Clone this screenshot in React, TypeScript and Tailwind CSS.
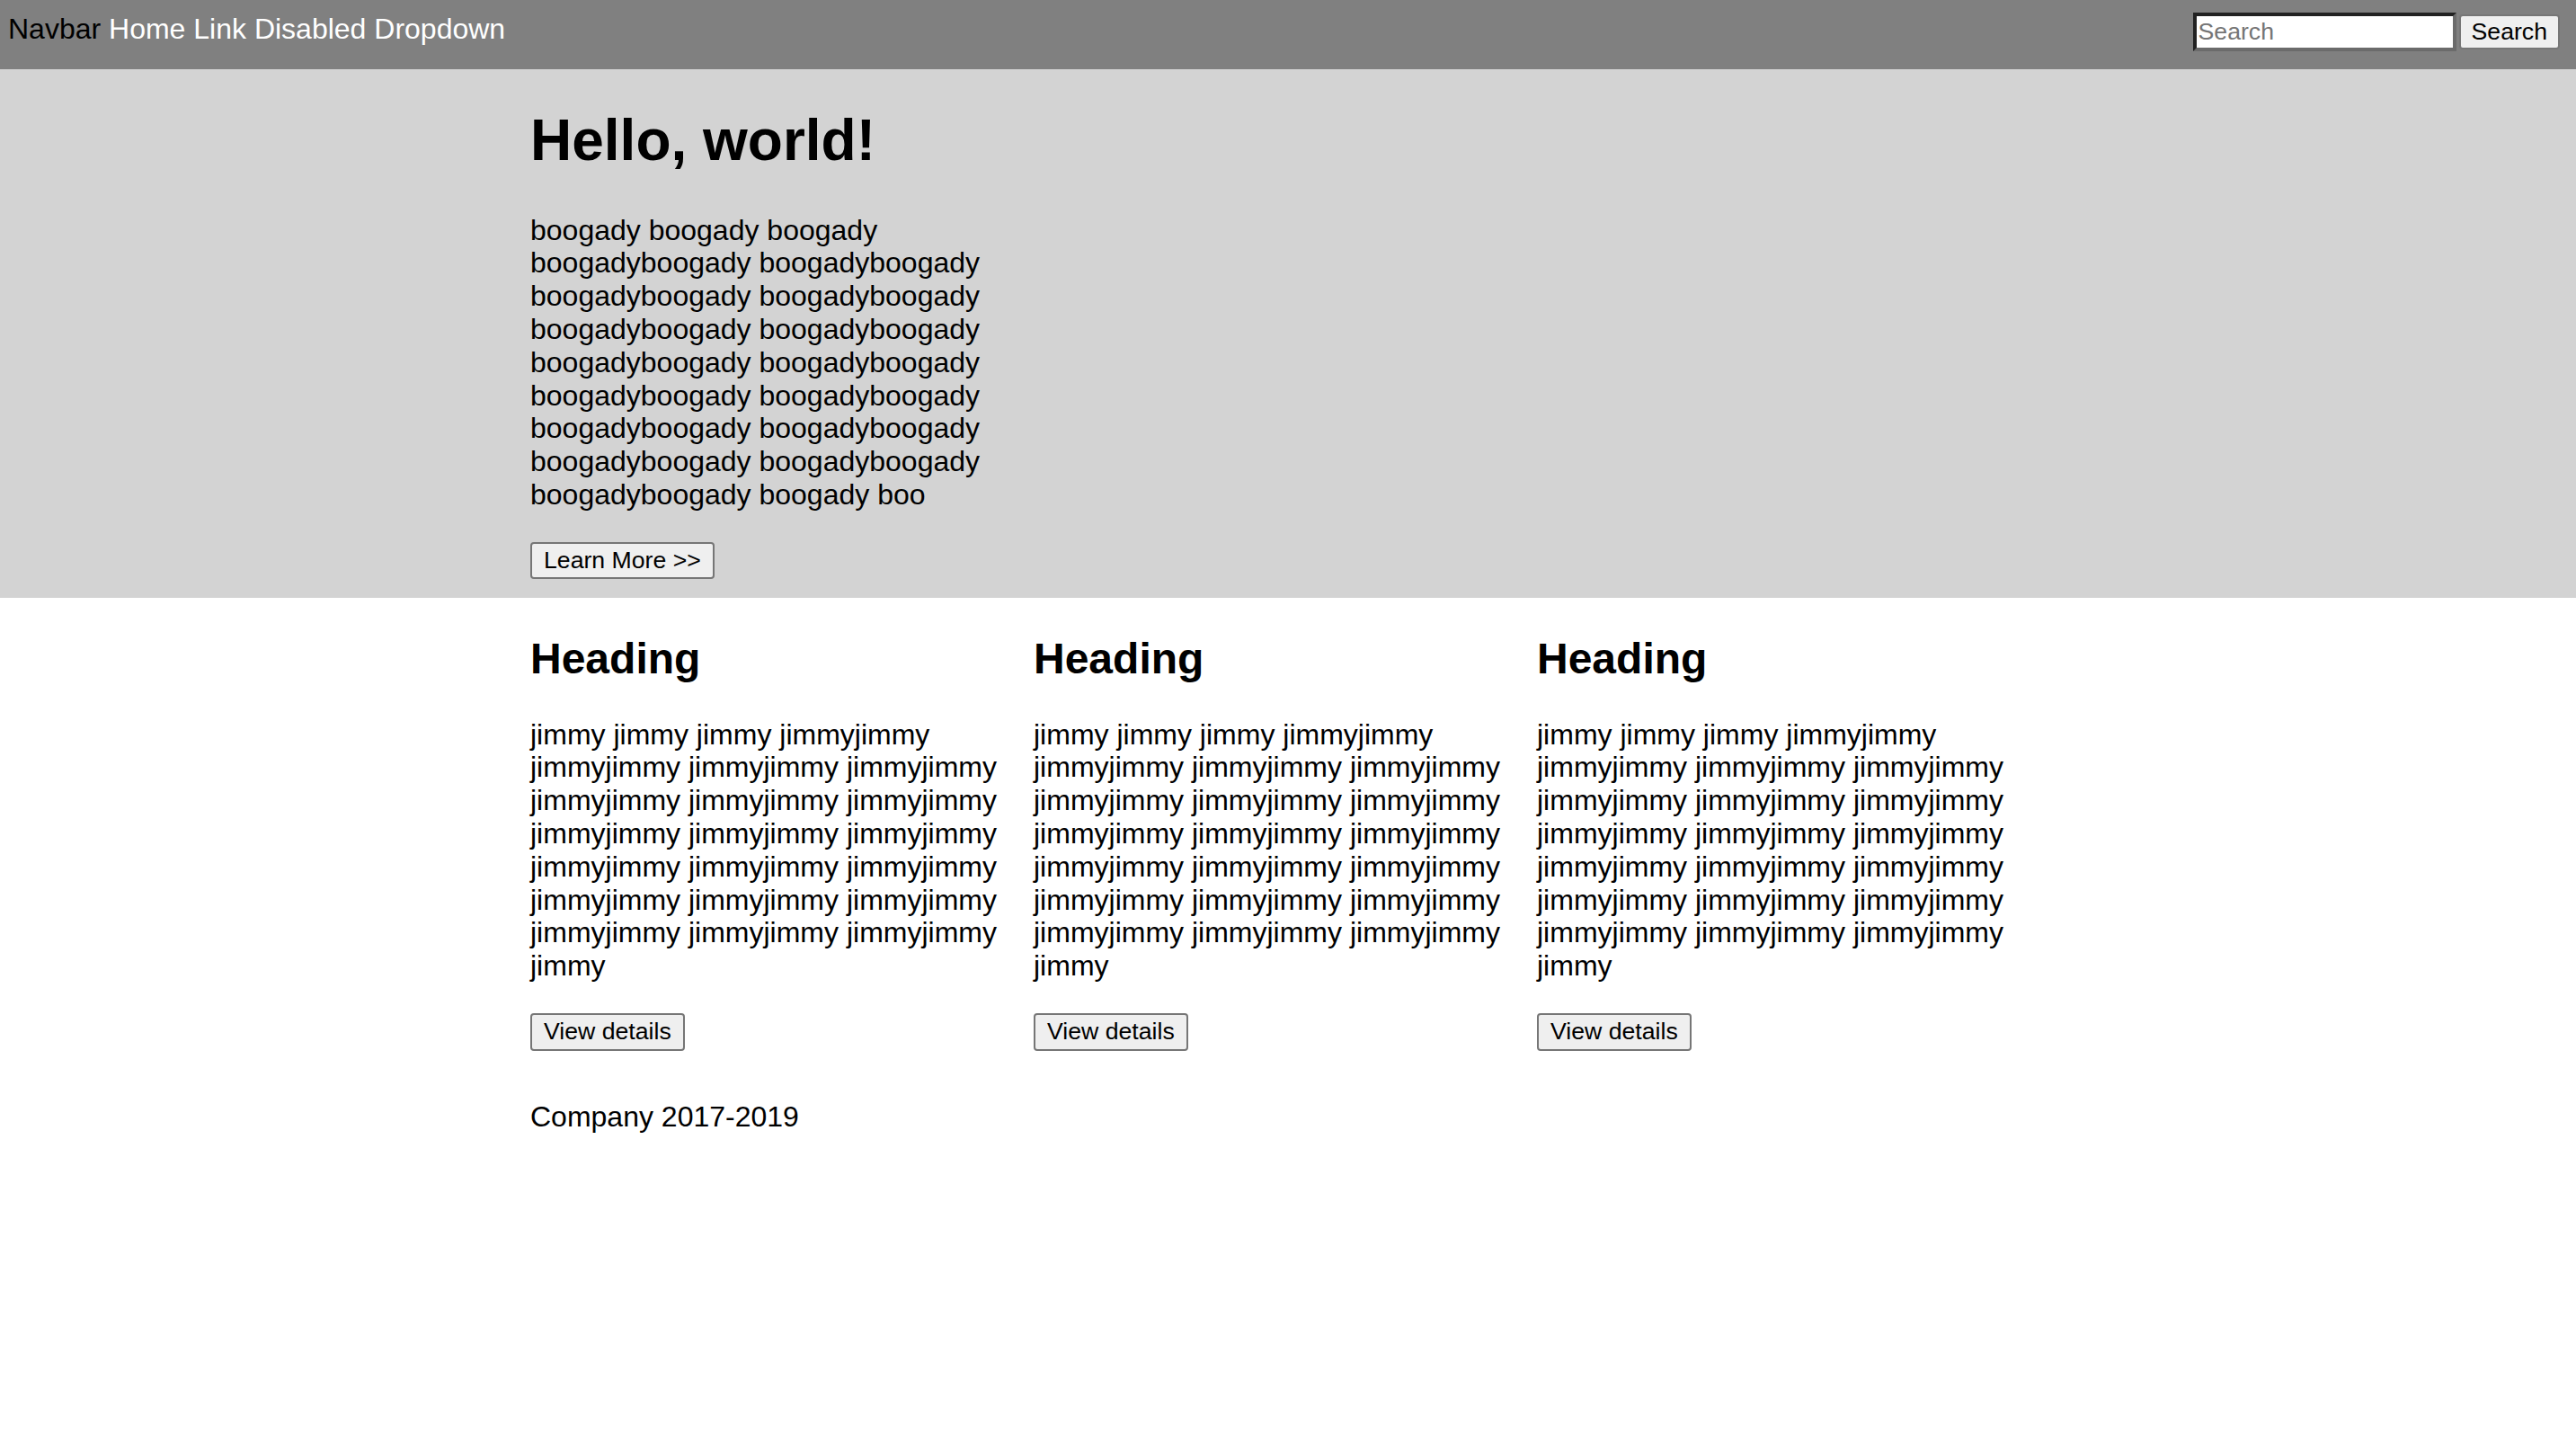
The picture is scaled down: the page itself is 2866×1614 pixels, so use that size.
const boogady =
  "boogady boogady boogady " +
  Array(7).fill("boogadyboogady boogadyboogady").join(" ") +
  " boogadyboogady boogady boo";

const jimmy = "jimmy jimmy jimmy jimmyjimmy " + Array(18).fill("jimmyjimmy").join(" ") + " jimmy";

function Column() {
  return (
    <div>
      <h2 className="mt-[40px] text-[48px] font-bold leading-[55.2px]">Heading</h2>
      <p className="mt-[38px] text-[32px] leading-[36.8px]">{jimmy}</p>
      <button className="mt-[34px] block rounded-[4px] border-2 border-[#767676] bg-[#efefef] px-[13px] py-[3.5px] text-[26.67px] leading-[30.6px] text-black">
        View details
      </button>
    </div>
  );
}

export default function App() {
  return (
    <div className="min-h-screen bg-white font-['Liberation_Sans',Arial,sans-serif] text-black">
      <nav className="flex h-[77px] items-start justify-between bg-[#808080] pl-[9px] pr-[18px] pt-[14px]">
        <div className="text-[32px] leading-[36.8px]">
          <span className="text-black">Navbar</span> <span className="text-white">Home</span>{" "}
          <span className="text-white">Link</span> <span className="text-white">Disabled</span>{" "}
          <span className="text-white">Dropdown</span>
        </div>
        <form className="flex items-start gap-[3px]" onSubmit={(e) => e.preventDefault()}>
          <input
            type="text"
            placeholder="Search"
            className="h-[43px] w-[293px] border-4 border-b-[#6b6b6b] border-l-[#222] border-r-[#6b6b6b] border-t-[#222] bg-white pl-[2px] text-[26.67px] leading-[30.6px] text-black outline-none placeholder:text-[#757575]"
          />
          <button className="mt-[2px] h-[39px] rounded-[4px] border-2 border-[#767676] bg-[#efefef] px-[12px] text-[26.67px] leading-[30.6px] text-black">
            Search
          </button>
        </form>
      </nav>

      <section className="bg-[#d3d3d3] pb-[21px] pt-[43px]">
        <div className="mx-auto w-[1686px]">
          <div className="w-[560px]">
            <h1 className="text-[64px] font-bold leading-[73.6px]">Hello, world!</h1>
            <p className="mt-[44px] text-[32px] leading-[36.8px]">{boogady}</p>
            <button className="mt-[34px] block rounded-[4px] border-2 border-[#767676] bg-[#efefef] px-[13px] py-[3.5px] text-[26.67px] leading-[30.6px] text-black">
              Learn More &gt;&gt;
            </button>
          </div>
        </div>
      </section>

      <main className="mx-auto w-[1686px]">
        <div className="grid grid-cols-[560px_560px_560px]">
          <Column />
          <Column />
          <Column />
        </div>
        <footer className="mt-[55px] text-[32px] leading-[36.8px]">Company 2017-2019</footer>
      </main>
    </div>
  );
}
